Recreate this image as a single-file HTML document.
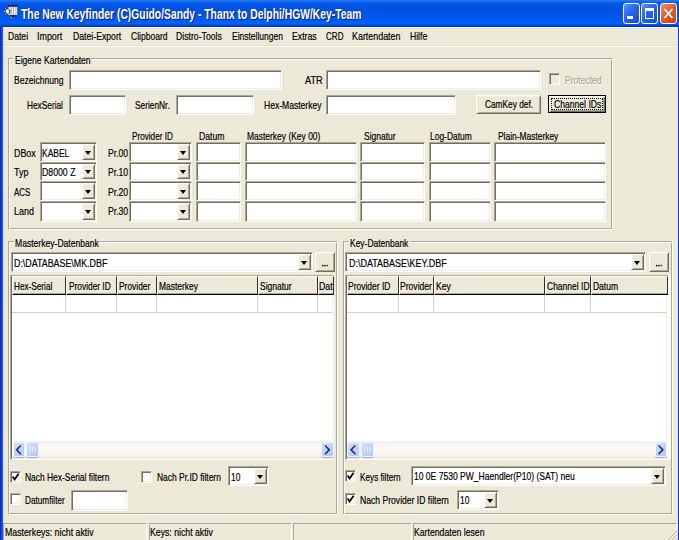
<!DOCTYPE html><html><head><meta charset="utf-8"><style>
html,body{margin:0;padding:0;}
body{width:679px;height:540px;position:relative;overflow:hidden;background:#ECE9D8;font-family:"Liberation Sans",sans-serif;}
.t{position:absolute;white-space:nowrap;line-height:1;transform-origin:0 0;-webkit-text-stroke:0.2px currentColor;}
.r{position:absolute;box-sizing:border-box;}
</style></head><body>
<div class="r" style="left:0px;top:0px;width:3px;height:540px;background:linear-gradient(to right,#0018C0,#1A4AE4 50%,#1E50E8);"></div>
<div class="r" style="left:678px;top:0px;width:1px;height:540px;background:#0A3CC8;"></div>
<div class="r" style="left:0px;top:0px;width:679px;height:27px;background:linear-gradient(to bottom,#2A7CF4 0px,#0F64EE 2px,#0058EA 4px,#0050E0 9px,#0054E6 14px,#005CF4 20px,#0062F8 24px,#0048D4 25px,#0035B8 27px);"></div>
<div class="t" style="left:22.10px;top:8.05px;font-size:14px;color:#0A1F6E;font-weight:bold;transform:scaleX(0.7386);-webkit-text-stroke:0;">The New Keyfinder (C)Guido/Sandy - Thanx to Delphi/HGW/Key-Team</div>
<div class="t" style="left:21.10px;top:7.05px;font-size:14px;color:#fff;font-weight:bold;transform:scaleX(0.7386);-webkit-text-stroke:0;">The New Keyfinder (C)Guido/Sandy - Thanx to Delphi/HGW/Key-Team</div>
<svg class="r" style="left:0px;top:0px" width="22" height="22" viewBox="0 0 22 22">
<rect x="8" y="5" width="9.5" height="1.8" fill="#0A1450"/>
<rect x="8.6" y="6.8" width="8.6" height="8.4" fill="#FFFFFF"/>
<rect x="10.6" y="6.8" width="1" height="8.4" fill="#8880A8"/>
<rect x="13" y="6.8" width="1" height="8.4" fill="#A8A0C8"/>
<rect x="15.4" y="6.8" width="1" height="8.4" fill="#A8A0C8"/>
<path d="M9.5 15.2 H16.5 V16.2 L13.5 16.5 L12.5 19.5 L11 17 L9.5 16.5 Z" fill="#0A1450"/>
<path d="M10.8 16.3 L12.3 18.6" stroke="#C8E0F8" stroke-width="1"/>
<circle cx="8" cy="11.5" r="2.2" fill="#F0E488"/>
<path d="M9 9.3 Q10.6 11.2 9.2 13.8" stroke="#505020" stroke-width="1.1" fill="none"/>
<circle cx="7" cy="10.5" r="0.9" fill="#FFFBD8"/>
<circle cx="4.6" cy="10" r="0.6" fill="#101010"/><circle cx="4.8" cy="12.8" r="0.6" fill="#101010"/><circle cx="6.3" cy="8.2" r="0.6" fill="#101010"/><circle cx="6.4" cy="14.8" r="0.6" fill="#101010"/>
<circle cx="4.4" cy="11.4" r="0.6" fill="#E8F8FF"/><circle cx="5.5" cy="8.8" r="0.5" fill="#E8F8FF"/><circle cx="5.6" cy="14.2" r="0.5" fill="#E8F8FF"/>
</svg>
<div class="r" style="left:623px;top:3px;width:17px;height:21px;border:1px solid #fff;border-radius:3px;background:linear-gradient(135deg,#5A8EF8,#2460E8 50%,#1A4FD0);"></div>
<div class="r" style="left:641px;top:3px;width:17px;height:21px;border:1px solid #fff;border-radius:3px;background:linear-gradient(135deg,#5A8EF8,#2460E8 50%,#1A4FD0);"></div>
<div class="r" style="left:660px;top:3px;width:17px;height:21px;border:1px solid #fff;border-radius:3px;background:linear-gradient(135deg,#F09070,#E05A28 50%,#C84418);"></div>
<div class="r" style="left:627px;top:16px;width:6px;height:3px;background:#fff;"></div>
<div class="r" style="left:645px;top:8px;width:9px;height:11px;border:1px solid #fff;border-top-width:3px;"></div>
<svg class="r" style="left:660px;top:3px" width="17" height="21"><path d="M4.5 6 L12.5 15 M12.5 6 L4.5 15" stroke="#fff" stroke-width="1.8"/></svg>
<div class="r" style="left:3px;top:27px;width:675px;height:513px;background:#ECE9D8;"></div>
<div class="r" style="left:3px;top:27px;width:674px;height:1px;background:#F8F6EE;"></div>
<div class="t" style="left:7.70px;top:30.87px;font-size:11.5px;color:#000;transform:scaleX(0.7464);">Datei</div>
<div class="t" style="left:37.10px;top:30.87px;font-size:11.5px;color:#000;transform:scaleX(0.7746);">Import</div>
<div class="t" style="left:72.50px;top:30.87px;font-size:11.5px;color:#000;transform:scaleX(0.7546);">Datei-Export</div>
<div class="t" style="left:130.50px;top:30.87px;font-size:11.5px;color:#000;transform:scaleX(0.7416);">Clipboard</div>
<div class="t" style="left:176.40px;top:30.87px;font-size:11.5px;color:#000;transform:scaleX(0.7559);">Distro-Tools</div>
<div class="t" style="left:231.60px;top:30.87px;font-size:11.5px;color:#000;transform:scaleX(0.7377);">Einstellungen</div>
<div class="t" style="left:291.80px;top:30.87px;font-size:11.5px;color:#000;transform:scaleX(0.7589);">Extras</div>
<div class="t" style="left:325.80px;top:30.87px;font-size:11.5px;color:#000;transform:scaleX(0.7013);">CRD</div>
<div class="t" style="left:352.40px;top:30.87px;font-size:11.5px;color:#000;transform:scaleX(0.7738);">Kartendaten</div>
<div class="t" style="left:410.20px;top:30.87px;font-size:11.5px;color:#000;transform:scaleX(0.7478);">Hilfe</div>
<div class="r" style="left:3px;top:45px;width:674px;height:1px;background:#E2DECD;"></div>
<div class="r" style="left:3px;top:46px;width:674px;height:1px;background:#fff;"></div>
<div class="r" style="left:8px;top:58px;width:604px;height:171px;border:1px solid #ACA899;"></div>
<div class="r" style="left:9px;top:59px;width:604px;height:171px;border:1px solid #fff;"></div>
<div class="r" style="left:13px;top:53px;width:78px;height:10px;background:#ECE9D8;"></div>
<div class="t" style="left:14.50px;top:55.17px;font-size:11.5px;color:#000;transform:scaleX(0.7437);">Eigene Kartendaten</div>
<div class="t" style="left:13.80px;top:75.17px;font-size:11.5px;color:#000;transform:scaleX(0.7447);">Bezeichnung</div>
<div class="r" style="left:69px;top:70px;width:213px;height:20px;background:#fff;border-style:solid;border-width:1px;border-color:#ACA899 #fff #fff #ACA899;box-shadow:inset 1px 1px 0 #716F64,inset -1px -1px 0 #F1EFE2;"></div>
<div class="t" style="left:304.70px;top:75.17px;font-size:11.5px;color:#000;transform:scaleX(0.8020);">ATR</div>
<div class="r" style="left:326px;top:70px;width:215px;height:20px;background:#fff;border-style:solid;border-width:1px;border-color:#ACA899 #fff #fff #ACA899;box-shadow:inset 1px 1px 0 #716F64,inset -1px -1px 0 #F1EFE2;"></div>
<div class="r" style="left:549px;top:73px;width:11px;height:12px;background:#ECE9D8;border-style:solid;border-width:1px;border-color:#ACA899 #fff #fff #ACA899;box-shadow:inset 1px 1px 0 #716F64,inset -1px -1px 0 #F1EFE2;"></div>
<div class="t" style="left:564.50px;top:74.87px;font-size:11.5px;color:#ACA899;transform:scaleX(0.7416);text-shadow:1px 1px 0 #fff;">Protected</div>
<div class="t" style="left:27.40px;top:100.27px;font-size:11.5px;color:#000;transform:scaleX(0.7210);">HexSerial</div>
<div class="r" style="left:69px;top:95px;width:57px;height:20px;background:#fff;border-style:solid;border-width:1px;border-color:#ACA899 #fff #fff #ACA899;box-shadow:inset 1px 1px 0 #716F64,inset -1px -1px 0 #F1EFE2;"></div>
<div class="t" style="left:134.60px;top:100.27px;font-size:11.5px;color:#000;transform:scaleX(0.7236);">SerienNr.</div>
<div class="r" style="left:176px;top:95px;width:78px;height:20px;background:#fff;border-style:solid;border-width:1px;border-color:#ACA899 #fff #fff #ACA899;box-shadow:inset 1px 1px 0 #716F64,inset -1px -1px 0 #F1EFE2;"></div>
<div class="t" style="left:263.50px;top:100.27px;font-size:11.5px;color:#000;transform:scaleX(0.7440);">Hex-Masterkey</div>
<div class="r" style="left:326px;top:95px;width:130px;height:20px;background:#fff;border-style:solid;border-width:1px;border-color:#ACA899 #fff #fff #ACA899;box-shadow:inset 1px 1px 0 #716F64,inset -1px -1px 0 #F1EFE2;"></div>
<div class="r" style="left:476px;top:95px;width:65px;height:19px;background:#ECE9D8;border-style:solid;border-width:1px;border-color:#fff #716F64 #716F64 #fff;box-shadow:inset 1px 1px 0 #F1EFE2,inset -1px -1px 0 #ACA899;"></div>
<div class="t" style="left:485.00px;top:98.67px;font-size:11.5px;color:#000;transform:scaleX(0.7221);">CamKey def.</div>
<div class="r" style="left:548px;top:95px;width:58px;height:18px;border:1px solid #000;background:#ECE9D8;box-shadow:inset 1px 1px 0 #fff,inset -1px -1px 0 #716F64,inset 2px 2px 0 #F1EFE2,inset -2px -2px 0 #ACA899;"></div>
<div class="r" style="left:551px;top:98px;width:52px;height:12px;border:1px dotted #000;"></div>
<div class="t" style="left:553.50px;top:98.67px;font-size:11.5px;color:#000;transform:scaleX(0.7478);">Channel IDs</div>
<div class="t" style="left:131.90px;top:130.67px;font-size:11.5px;color:#000;transform:scaleX(0.7096);">Provider ID</div>
<div class="t" style="left:198.50px;top:130.67px;font-size:11.5px;color:#000;transform:scaleX(0.7517);">Datum</div>
<div class="t" style="left:246.70px;top:130.67px;font-size:11.5px;color:#000;transform:scaleX(0.7362);">Masterkey (Key 00)</div>
<div class="t" style="left:363.60px;top:130.67px;font-size:11.5px;color:#000;transform:scaleX(0.7387);">Signatur</div>
<div class="t" style="left:430.30px;top:130.67px;font-size:11.5px;color:#000;transform:scaleX(0.7361);">Log-Datum</div>
<div class="t" style="left:497.50px;top:130.67px;font-size:11.5px;color:#000;transform:scaleX(0.7313);">Plain-Masterkey</div>
<div class="t" style="left:13.60px;top:147.97px;font-size:11.5px;color:#000;transform:scaleX(0.7702);">DBox</div>
<div class="r" style="left:40px;top:142px;width:57px;height:20px;background:#fff;border-style:solid;border-width:1px;border-color:#ACA899 #fff #fff #ACA899;box-shadow:inset 1px 1px 0 #716F64,inset -1px -1px 0 #F1EFE2;"></div>
<div class="r" style="left:82px;top:144px;width:13px;height:16px;background:#ECE9D8;border-style:solid;border-width:1px;border-color:#fff #716F64 #716F64 #fff;box-shadow:inset 1px 1px 0 #F1EFE2,inset -1px -1px 0 #ACA899;"></div>
<div class="r" style="left:85.3px;top:150.7px;width:0;height:0;border-left:3.5px solid transparent;border-right:3.5px solid transparent;border-top:4px solid #000;"></div>
<div class="t" style="left:107.50px;top:147.97px;font-size:11.5px;color:#000;transform:scaleX(0.7501);">Pr.00</div>
<div class="r" style="left:129px;top:142px;width:63px;height:20px;background:#fff;border-style:solid;border-width:1px;border-color:#ACA899 #fff #fff #ACA899;box-shadow:inset 1px 1px 0 #716F64,inset -1px -1px 0 #F1EFE2;"></div>
<div class="r" style="left:177px;top:144px;width:13px;height:16px;background:#ECE9D8;border-style:solid;border-width:1px;border-color:#fff #716F64 #716F64 #fff;box-shadow:inset 1px 1px 0 #F1EFE2,inset -1px -1px 0 #ACA899;"></div>
<div class="r" style="left:180.3px;top:150.7px;width:0;height:0;border-left:3.5px solid transparent;border-right:3.5px solid transparent;border-top:4px solid #000;"></div>
<div class="r" style="left:196px;top:142px;width:45px;height:20px;background:#fff;border-style:solid;border-width:1px;border-color:#ACA899 #fff #fff #ACA899;box-shadow:inset 1px 1px 0 #716F64,inset -1px -1px 0 #F1EFE2;"></div>
<div class="r" style="left:245px;top:142px;width:112px;height:20px;background:#fff;border-style:solid;border-width:1px;border-color:#ACA899 #fff #fff #ACA899;box-shadow:inset 1px 1px 0 #716F64,inset -1px -1px 0 #F1EFE2;"></div>
<div class="r" style="left:360px;top:142px;width:65px;height:20px;background:#fff;border-style:solid;border-width:1px;border-color:#ACA899 #fff #fff #ACA899;box-shadow:inset 1px 1px 0 #716F64,inset -1px -1px 0 #F1EFE2;"></div>
<div class="r" style="left:429px;top:142px;width:62px;height:20px;background:#fff;border-style:solid;border-width:1px;border-color:#ACA899 #fff #fff #ACA899;box-shadow:inset 1px 1px 0 #716F64,inset -1px -1px 0 #F1EFE2;"></div>
<div class="r" style="left:494px;top:142px;width:112px;height:20px;background:#fff;border-style:solid;border-width:1px;border-color:#ACA899 #fff #fff #ACA899;box-shadow:inset 1px 1px 0 #716F64,inset -1px -1px 0 #F1EFE2;"></div>
<div class="t" style="left:13.60px;top:167.47px;font-size:11.5px;color:#000;transform:scaleX(0.7777);">Typ</div>
<div class="r" style="left:40px;top:162px;width:57px;height:19px;background:#fff;border-style:solid;border-width:1px;border-color:#ACA899 #fff #fff #ACA899;box-shadow:inset 1px 1px 0 #716F64,inset -1px -1px 0 #F1EFE2;"></div>
<div class="r" style="left:82px;top:164px;width:13px;height:15px;background:#ECE9D8;border-style:solid;border-width:1px;border-color:#fff #716F64 #716F64 #fff;box-shadow:inset 1px 1px 0 #F1EFE2,inset -1px -1px 0 #ACA899;"></div>
<div class="r" style="left:85.3px;top:170.2px;width:0;height:0;border-left:3.5px solid transparent;border-right:3.5px solid transparent;border-top:4px solid #000;"></div>
<div class="t" style="left:107.50px;top:167.47px;font-size:11.5px;color:#000;transform:scaleX(0.7501);">Pr.10</div>
<div class="r" style="left:129px;top:162px;width:63px;height:19px;background:#fff;border-style:solid;border-width:1px;border-color:#ACA899 #fff #fff #ACA899;box-shadow:inset 1px 1px 0 #716F64,inset -1px -1px 0 #F1EFE2;"></div>
<div class="r" style="left:177px;top:164px;width:13px;height:15px;background:#ECE9D8;border-style:solid;border-width:1px;border-color:#fff #716F64 #716F64 #fff;box-shadow:inset 1px 1px 0 #F1EFE2,inset -1px -1px 0 #ACA899;"></div>
<div class="r" style="left:180.3px;top:170.2px;width:0;height:0;border-left:3.5px solid transparent;border-right:3.5px solid transparent;border-top:4px solid #000;"></div>
<div class="r" style="left:196px;top:162px;width:45px;height:19px;background:#fff;border-style:solid;border-width:1px;border-color:#ACA899 #fff #fff #ACA899;box-shadow:inset 1px 1px 0 #716F64,inset -1px -1px 0 #F1EFE2;"></div>
<div class="r" style="left:245px;top:162px;width:112px;height:19px;background:#fff;border-style:solid;border-width:1px;border-color:#ACA899 #fff #fff #ACA899;box-shadow:inset 1px 1px 0 #716F64,inset -1px -1px 0 #F1EFE2;"></div>
<div class="r" style="left:360px;top:162px;width:65px;height:19px;background:#fff;border-style:solid;border-width:1px;border-color:#ACA899 #fff #fff #ACA899;box-shadow:inset 1px 1px 0 #716F64,inset -1px -1px 0 #F1EFE2;"></div>
<div class="r" style="left:429px;top:162px;width:62px;height:19px;background:#fff;border-style:solid;border-width:1px;border-color:#ACA899 #fff #fff #ACA899;box-shadow:inset 1px 1px 0 #716F64,inset -1px -1px 0 #F1EFE2;"></div>
<div class="r" style="left:494px;top:162px;width:112px;height:19px;background:#fff;border-style:solid;border-width:1px;border-color:#ACA899 #fff #fff #ACA899;box-shadow:inset 1px 1px 0 #716F64,inset -1px -1px 0 #F1EFE2;"></div>
<div class="t" style="left:13.60px;top:186.67px;font-size:11.5px;color:#000;transform:scaleX(0.6881);">ACS</div>
<div class="r" style="left:40px;top:181px;width:57px;height:20px;background:#fff;border-style:solid;border-width:1px;border-color:#ACA899 #fff #fff #ACA899;box-shadow:inset 1px 1px 0 #716F64,inset -1px -1px 0 #F1EFE2;"></div>
<div class="r" style="left:82px;top:183px;width:13px;height:16px;background:#ECE9D8;border-style:solid;border-width:1px;border-color:#fff #716F64 #716F64 #fff;box-shadow:inset 1px 1px 0 #F1EFE2,inset -1px -1px 0 #ACA899;"></div>
<div class="r" style="left:85.3px;top:189.7px;width:0;height:0;border-left:3.5px solid transparent;border-right:3.5px solid transparent;border-top:4px solid #000;"></div>
<div class="t" style="left:107.50px;top:186.67px;font-size:11.5px;color:#000;transform:scaleX(0.7501);">Pr.20</div>
<div class="r" style="left:129px;top:181px;width:63px;height:20px;background:#fff;border-style:solid;border-width:1px;border-color:#ACA899 #fff #fff #ACA899;box-shadow:inset 1px 1px 0 #716F64,inset -1px -1px 0 #F1EFE2;"></div>
<div class="r" style="left:177px;top:183px;width:13px;height:16px;background:#ECE9D8;border-style:solid;border-width:1px;border-color:#fff #716F64 #716F64 #fff;box-shadow:inset 1px 1px 0 #F1EFE2,inset -1px -1px 0 #ACA899;"></div>
<div class="r" style="left:180.3px;top:189.7px;width:0;height:0;border-left:3.5px solid transparent;border-right:3.5px solid transparent;border-top:4px solid #000;"></div>
<div class="r" style="left:196px;top:181px;width:45px;height:20px;background:#fff;border-style:solid;border-width:1px;border-color:#ACA899 #fff #fff #ACA899;box-shadow:inset 1px 1px 0 #716F64,inset -1px -1px 0 #F1EFE2;"></div>
<div class="r" style="left:245px;top:181px;width:112px;height:20px;background:#fff;border-style:solid;border-width:1px;border-color:#ACA899 #fff #fff #ACA899;box-shadow:inset 1px 1px 0 #716F64,inset -1px -1px 0 #F1EFE2;"></div>
<div class="r" style="left:360px;top:181px;width:65px;height:20px;background:#fff;border-style:solid;border-width:1px;border-color:#ACA899 #fff #fff #ACA899;box-shadow:inset 1px 1px 0 #716F64,inset -1px -1px 0 #F1EFE2;"></div>
<div class="r" style="left:429px;top:181px;width:62px;height:20px;background:#fff;border-style:solid;border-width:1px;border-color:#ACA899 #fff #fff #ACA899;box-shadow:inset 1px 1px 0 #716F64,inset -1px -1px 0 #F1EFE2;"></div>
<div class="r" style="left:494px;top:181px;width:112px;height:20px;background:#fff;border-style:solid;border-width:1px;border-color:#ACA899 #fff #fff #ACA899;box-shadow:inset 1px 1px 0 #716F64,inset -1px -1px 0 #F1EFE2;"></div>
<div class="t" style="left:13.60px;top:205.77px;font-size:11.5px;color:#000;transform:scaleX(0.7756);">Land</div>
<div class="r" style="left:40px;top:201px;width:57px;height:21px;background:#fff;border-style:solid;border-width:1px;border-color:#ACA899 #fff #fff #ACA899;box-shadow:inset 1px 1px 0 #716F64,inset -1px -1px 0 #F1EFE2;"></div>
<div class="r" style="left:82px;top:203px;width:13px;height:17px;background:#ECE9D8;border-style:solid;border-width:1px;border-color:#fff #716F64 #716F64 #fff;box-shadow:inset 1px 1px 0 #F1EFE2,inset -1px -1px 0 #ACA899;"></div>
<div class="r" style="left:85.3px;top:210.2px;width:0;height:0;border-left:3.5px solid transparent;border-right:3.5px solid transparent;border-top:4px solid #000;"></div>
<div class="t" style="left:107.50px;top:205.77px;font-size:11.5px;color:#000;transform:scaleX(0.7501);">Pr.30</div>
<div class="r" style="left:129px;top:201px;width:63px;height:21px;background:#fff;border-style:solid;border-width:1px;border-color:#ACA899 #fff #fff #ACA899;box-shadow:inset 1px 1px 0 #716F64,inset -1px -1px 0 #F1EFE2;"></div>
<div class="r" style="left:177px;top:203px;width:13px;height:17px;background:#ECE9D8;border-style:solid;border-width:1px;border-color:#fff #716F64 #716F64 #fff;box-shadow:inset 1px 1px 0 #F1EFE2,inset -1px -1px 0 #ACA899;"></div>
<div class="r" style="left:180.3px;top:210.2px;width:0;height:0;border-left:3.5px solid transparent;border-right:3.5px solid transparent;border-top:4px solid #000;"></div>
<div class="r" style="left:196px;top:201px;width:45px;height:21px;background:#fff;border-style:solid;border-width:1px;border-color:#ACA899 #fff #fff #ACA899;box-shadow:inset 1px 1px 0 #716F64,inset -1px -1px 0 #F1EFE2;"></div>
<div class="r" style="left:245px;top:201px;width:112px;height:21px;background:#fff;border-style:solid;border-width:1px;border-color:#ACA899 #fff #fff #ACA899;box-shadow:inset 1px 1px 0 #716F64,inset -1px -1px 0 #F1EFE2;"></div>
<div class="r" style="left:360px;top:201px;width:65px;height:21px;background:#fff;border-style:solid;border-width:1px;border-color:#ACA899 #fff #fff #ACA899;box-shadow:inset 1px 1px 0 #716F64,inset -1px -1px 0 #F1EFE2;"></div>
<div class="r" style="left:429px;top:201px;width:62px;height:21px;background:#fff;border-style:solid;border-width:1px;border-color:#ACA899 #fff #fff #ACA899;box-shadow:inset 1px 1px 0 #716F64,inset -1px -1px 0 #F1EFE2;"></div>
<div class="r" style="left:494px;top:201px;width:112px;height:21px;background:#fff;border-style:solid;border-width:1px;border-color:#ACA899 #fff #fff #ACA899;box-shadow:inset 1px 1px 0 #716F64,inset -1px -1px 0 #F1EFE2;"></div>
<div class="t" style="left:42.40px;top:147.97px;font-size:11.5px;color:#000;transform:scaleX(0.7372);">KABEL</div>
<div class="t" style="left:42.40px;top:167.47px;font-size:11.5px;color:#000;transform:scaleX(0.7586);">D8000 Z</div>
<div class="r" style="left:8px;top:241px;width:329px;height:273px;border:1px solid #ACA899;"></div>
<div class="r" style="left:9px;top:242px;width:329px;height:273px;border:1px solid #fff;"></div>
<div class="r" style="left:14px;top:236px;width:86px;height:10px;background:#ECE9D8;"></div>
<div class="t" style="left:15.00px;top:238.27px;font-size:11.5px;color:#000;transform:scaleX(0.7452);">Masterkey-Datenbank</div>
<div class="r" style="left:11px;top:252px;width:302px;height:20px;background:#fff;border-style:solid;border-width:1px;border-color:#ACA899 #fff #fff #ACA899;box-shadow:inset 1px 1px 0 #716F64,inset -1px -1px 0 #F1EFE2;"></div>
<div class="r" style="left:298px;top:254px;width:13px;height:16px;background:#ECE9D8;border-style:solid;border-width:1px;border-color:#fff #716F64 #716F64 #fff;box-shadow:inset 1px 1px 0 #F1EFE2,inset -1px -1px 0 #ACA899;"></div>
<div class="r" style="left:301.3px;top:260.7px;width:0;height:0;border-left:3.5px solid transparent;border-right:3.5px solid transparent;border-top:4px solid #000;"></div>
<div class="t" style="left:14.20px;top:257.87px;font-size:11.5px;color:#000;transform:scaleX(0.7712);">D:\DATABASE\MK.DBF</div>
<div class="r" style="left:315px;top:252px;width:20px;height:20px;background:#ECE9D8;border-style:solid;border-width:1px;border-color:#fff #716F64 #716F64 #fff;box-shadow:inset 1px 1px 0 #F1EFE2,inset -1px -1px 0 #ACA899;"></div>
<svg class="r" style="left:320.2px;top:262.9px" width="12" height="5"><circle cx="2.7" cy="2.6" r="0.85" fill="#000"/><circle cx="5.0" cy="2.6" r="0.85" fill="#000"/><circle cx="7.3" cy="2.6" r="0.8" fill="#222"/></svg>
<div class="r" style="left:10px;top:275px;width:324px;height:185px;background:#fff;border-style:solid;border-width:1px;border-color:#ACA899 #fff #fff #ACA899;box-shadow:inset 1px 1px 0 #716F64,inset -1px -1px 0 #F1EFE2;"></div>
<div class="r" style="left:12px;top:276px;width:54px;height:19px;background:#ECE9D8;border-style:solid;border-width:1px;border-color:#fff #303030 #000 #fff;box-shadow:inset 0 -1px 0 #ACA899;"></div>
<div class="r" style="left:66px;top:276px;width:51px;height:19px;background:#ECE9D8;border-style:solid;border-width:1px;border-color:#fff #303030 #000 #fff;box-shadow:inset 0 -1px 0 #ACA899;"></div>
<div class="r" style="left:117px;top:276px;width:40px;height:19px;background:#ECE9D8;border-style:solid;border-width:1px;border-color:#fff #303030 #000 #fff;box-shadow:inset 0 -1px 0 #ACA899;"></div>
<div class="r" style="left:157px;top:276px;width:101px;height:19px;background:#ECE9D8;border-style:solid;border-width:1px;border-color:#fff #303030 #000 #fff;box-shadow:inset 0 -1px 0 #ACA899;"></div>
<div class="r" style="left:258px;top:276px;width:60px;height:19px;background:#ECE9D8;border-style:solid;border-width:1px;border-color:#fff #303030 #000 #fff;box-shadow:inset 0 -1px 0 #ACA899;"></div>
<div class="r" style="left:318px;top:276px;width:16px;height:19px;background:#ECE9D8;border-style:solid;border-width:1px;border-color:#fff #303030 #000 #fff;box-shadow:inset 0 -1px 0 #ACA899;"></div>
<div class="t" style="left:14.20px;top:281.27px;font-size:11.5px;color:#000;transform:scaleX(0.7132);">Hex-Serial</div>
<div class="t" style="left:68.50px;top:281.27px;font-size:11.5px;color:#000;transform:scaleX(0.7252);">Provider ID</div>
<div class="t" style="left:119.00px;top:281.27px;font-size:11.5px;color:#000;transform:scaleX(0.7317);">Provider</div>
<div class="t" style="left:159.00px;top:281.27px;font-size:11.5px;color:#000;transform:scaleX(0.7356);">Masterkey</div>
<div class="t" style="left:259.70px;top:281.27px;font-size:11.5px;color:#000;transform:scaleX(0.7387);">Signatur</div>
<div class="r" style="left:12px;top:312px;width:320px;height:1px;background:#D4D0C8;"></div>
<div class="r" style="left:65px;top:295px;width:1px;height:17px;background:#D4D0C8;"></div>
<div class="r" style="left:116px;top:295px;width:1px;height:17px;background:#D4D0C8;"></div>
<div class="r" style="left:156px;top:295px;width:1px;height:17px;background:#D4D0C8;"></div>
<div class="r" style="left:257px;top:295px;width:1px;height:17px;background:#D4D0C8;"></div>
<div class="r" style="left:317px;top:295px;width:1px;height:17px;background:#D4D0C8;"></div>
<div class="t" style="left:318.70px;top:281.27px;font-size:11.5px;color:#000;transform:scaleX(0.7637);">Dat</div>
<div class="r" style="left:13px;top:441px;width:319px;height:17px;background:linear-gradient(to bottom,#F0EFE8,#FBFAF6 40%,#F6F5EE 80%,#EEEDE5);"></div>
<div class="r" style="left:13px;top:442px;width:12px;height:15px;border:1px solid #F0F4FF;border-radius:2px;box-shadow:0 1px 0 #A4B4D4;background:linear-gradient(135deg,#D4E0FC,#C0CFF8 60%,#B4C6F4);"></div>
<svg class="r" style="left:13px;top:442px" width="12" height="15"><path d="M7.8 3.5 L3.6 7.8 L7.8 12.1" stroke="#26386E" stroke-width="1.7" fill="none"/></svg>
<div class="r" style="left:26px;top:442px;width:13px;height:15px;border:1px solid #F0F4FF;border-radius:2px;box-shadow:0 1px 0 #A4B4D4;background:linear-gradient(135deg,#D4E0FC,#C0CFF8 60%,#B4C6F4);"></div>
<svg class="r" style="left:26px;top:442px" width="13" height="15"><path d="M4.0 4.5 V10.5 M6.5 4.5 V10.5 M9.0 4.5 V10.5" stroke="#E8EEFE" stroke-width="1" fill="none"/></svg>
<div class="r" style="left:321px;top:442px;width:13px;height:15px;border:1px solid #F0F4FF;border-radius:2px;box-shadow:0 1px 0 #A4B4D4;background:linear-gradient(135deg,#D4E0FC,#C0CFF8 60%,#B4C6F4);"></div>
<svg class="r" style="left:321px;top:442px" width="13" height="15"><path d="M4.1 3.5 L8.3 7.8 L4.1 12.1" stroke="#26386E" stroke-width="1.7" fill="none"/></svg>
<div class="r" style="left:10px;top:471px;width:11px;height:12px;background:#fff;border-style:solid;border-width:1px;border-color:#ACA899 #fff #fff #ACA899;box-shadow:inset 1px 1px 0 #716F64,inset -1px -1px 0 #F1EFE2;"></div>
<svg class="r" style="left:10px;top:471px" width="11" height="12"><path d="M2.6 5.6 L4.6 8.4 L8.6 2.8" stroke="#000" stroke-width="1.8" fill="none"/></svg>
<div class="t" style="left:25.10px;top:472.27px;font-size:11.5px;color:#000;transform:scaleX(0.7330);">Nach Hex-Serial filtern</div>
<div class="r" style="left:10px;top:493px;width:11px;height:12px;background:#fff;border-style:solid;border-width:1px;border-color:#ACA899 #fff #fff #ACA899;box-shadow:inset 1px 1px 0 #716F64,inset -1px -1px 0 #F1EFE2;"></div>
<div class="t" style="left:25.10px;top:494.87px;font-size:11.5px;color:#000;transform:scaleX(0.7147);">Datumfilter</div>
<div class="r" style="left:71px;top:490px;width:57px;height:21px;background:#fff;border-style:solid;border-width:1px;border-color:#ACA899 #fff #fff #ACA899;box-shadow:inset 1px 1px 0 #716F64,inset -1px -1px 0 #F1EFE2;"></div>
<div class="r" style="left:141px;top:471px;width:11px;height:12px;background:#fff;border-style:solid;border-width:1px;border-color:#ACA899 #fff #fff #ACA899;box-shadow:inset 1px 1px 0 #716F64,inset -1px -1px 0 #F1EFE2;"></div>
<div class="t" style="left:157.30px;top:471.67px;font-size:11.5px;color:#000;transform:scaleX(0.7350);">Nach Pr.ID filtern</div>
<div class="r" style="left:228px;top:466px;width:41px;height:20px;background:#fff;border-style:solid;border-width:1px;border-color:#ACA899 #fff #fff #ACA899;box-shadow:inset 1px 1px 0 #716F64,inset -1px -1px 0 #F1EFE2;"></div>
<div class="r" style="left:254px;top:468px;width:13px;height:16px;background:#ECE9D8;border-style:solid;border-width:1px;border-color:#fff #716F64 #716F64 #fff;box-shadow:inset 1px 1px 0 #F1EFE2,inset -1px -1px 0 #ACA899;"></div>
<div class="r" style="left:257.3px;top:474.7px;width:0;height:0;border-left:3.5px solid transparent;border-right:3.5px solid transparent;border-top:4px solid #000;"></div>
<div class="t" style="left:231.00px;top:471.67px;font-size:11.5px;color:#000;transform:scaleX(0.7286);">10</div>
<div class="r" style="left:343px;top:241px;width:329px;height:273px;border:1px solid #ACA899;"></div>
<div class="r" style="left:344px;top:242px;width:329px;height:273px;border:1px solid #fff;"></div>
<div class="r" style="left:348px;top:236px;width:62px;height:10px;background:#ECE9D8;"></div>
<div class="t" style="left:349.60px;top:238.27px;font-size:11.5px;color:#000;transform:scaleX(0.7360);">Key-Datenbank</div>
<div class="r" style="left:345px;top:252px;width:301px;height:20px;background:#fff;border-style:solid;border-width:1px;border-color:#ACA899 #fff #fff #ACA899;box-shadow:inset 1px 1px 0 #716F64,inset -1px -1px 0 #F1EFE2;"></div>
<div class="r" style="left:631px;top:254px;width:13px;height:16px;background:#ECE9D8;border-style:solid;border-width:1px;border-color:#fff #716F64 #716F64 #fff;box-shadow:inset 1px 1px 0 #F1EFE2,inset -1px -1px 0 #ACA899;"></div>
<div class="r" style="left:634.3px;top:260.7px;width:0;height:0;border-left:3.5px solid transparent;border-right:3.5px solid transparent;border-top:4px solid #000;"></div>
<div class="t" style="left:348.60px;top:257.87px;font-size:11.5px;color:#000;transform:scaleX(0.7801);">D:\DATABASE\KEY.DBF</div>
<div class="r" style="left:649px;top:252px;width:20px;height:20px;background:#ECE9D8;border-style:solid;border-width:1px;border-color:#fff #716F64 #716F64 #fff;box-shadow:inset 1px 1px 0 #F1EFE2,inset -1px -1px 0 #ACA899;"></div>
<svg class="r" style="left:654.2px;top:262.9px" width="12" height="5"><circle cx="2.7" cy="2.6" r="0.85" fill="#000"/><circle cx="5.0" cy="2.6" r="0.85" fill="#000"/><circle cx="7.3" cy="2.6" r="0.8" fill="#222"/></svg>
<div class="r" style="left:345px;top:275px;width:323px;height:185px;background:#fff;border-style:solid;border-width:1px;border-color:#ACA899 #fff #fff #ACA899;box-shadow:inset 1px 1px 0 #716F64,inset -1px -1px 0 #F1EFE2;"></div>
<div class="r" style="left:347px;top:276px;width:52px;height:19px;background:#ECE9D8;border-style:solid;border-width:1px;border-color:#fff #303030 #000 #fff;box-shadow:inset 0 -1px 0 #ACA899;"></div>
<div class="r" style="left:399px;top:276px;width:35px;height:19px;background:#ECE9D8;border-style:solid;border-width:1px;border-color:#fff #303030 #000 #fff;box-shadow:inset 0 -1px 0 #ACA899;"></div>
<div class="r" style="left:434px;top:276px;width:111px;height:19px;background:#ECE9D8;border-style:solid;border-width:1px;border-color:#fff #303030 #000 #fff;box-shadow:inset 0 -1px 0 #ACA899;"></div>
<div class="r" style="left:545px;top:276px;width:46px;height:19px;background:#ECE9D8;border-style:solid;border-width:1px;border-color:#fff #303030 #000 #fff;box-shadow:inset 0 -1px 0 #ACA899;"></div>
<div class="r" style="left:591px;top:276px;width:77px;height:19px;background:#ECE9D8;border-style:solid;border-width:1px;border-color:#fff #303030 #000 #fff;box-shadow:inset 0 -1px 0 #ACA899;"></div>
<div class="t" style="left:348.30px;top:281.27px;font-size:11.5px;color:#000;transform:scaleX(0.7374);">Provider ID</div>
<div class="t" style="left:400.10px;top:281.27px;font-size:11.5px;color:#000;transform:scaleX(0.7457);">Provider</div>
<div class="t" style="left:435.50px;top:281.27px;font-size:11.5px;color:#000;transform:scaleX(0.7533);">Key</div>
<div class="t" style="left:546.80px;top:281.27px;font-size:11.5px;color:#000;transform:scaleX(0.7391);">Channel ID</div>
<div class="t" style="left:592.60px;top:281.27px;font-size:11.5px;color:#000;transform:scaleX(0.7369);">Datum</div>
<div class="r" style="left:347px;top:312px;width:319px;height:1px;background:#D4D0C8;"></div>
<div class="r" style="left:398px;top:295px;width:1px;height:17px;background:#D4D0C8;"></div>
<div class="r" style="left:433px;top:295px;width:1px;height:17px;background:#D4D0C8;"></div>
<div class="r" style="left:544px;top:295px;width:1px;height:17px;background:#D4D0C8;"></div>
<div class="r" style="left:590px;top:295px;width:1px;height:17px;background:#D4D0C8;"></div>
<div class="r" style="left:347px;top:441px;width:319px;height:17px;background:linear-gradient(to bottom,#F0EFE8,#FBFAF6 40%,#F6F5EE 80%,#EEEDE5);"></div>
<div class="r" style="left:347px;top:442px;width:13px;height:15px;border:1px solid #F0F4FF;border-radius:2px;box-shadow:0 1px 0 #A4B4D4;background:linear-gradient(135deg,#D4E0FC,#C0CFF8 60%,#B4C6F4);"></div>
<svg class="r" style="left:347px;top:442px" width="13" height="15"><path d="M8.3 3.5 L4.1 7.8 L8.3 12.1" stroke="#26386E" stroke-width="1.7" fill="none"/></svg>
<div class="r" style="left:361px;top:442px;width:13px;height:15px;border:1px solid #F0F4FF;border-radius:2px;box-shadow:0 1px 0 #A4B4D4;background:linear-gradient(135deg,#D4E0FC,#C0CFF8 60%,#B4C6F4);"></div>
<svg class="r" style="left:361px;top:442px" width="13" height="15"><path d="M4.0 4.5 V10.5 M6.5 4.5 V10.5 M9.0 4.5 V10.5" stroke="#E8EEFE" stroke-width="1" fill="none"/></svg>
<div class="r" style="left:655px;top:442px;width:12px;height:15px;border:1px solid #F0F4FF;border-radius:2px;box-shadow:0 1px 0 #A4B4D4;background:linear-gradient(135deg,#D4E0FC,#C0CFF8 60%,#B4C6F4);"></div>
<svg class="r" style="left:655px;top:442px" width="12" height="15"><path d="M3.6 3.5 L7.8 7.8 L3.6 12.1" stroke="#26386E" stroke-width="1.7" fill="none"/></svg>
<div class="r" style="left:668px;top:276px;width:3px;height:183px;background:#FAFAF6;"></div>
<div class="r" style="left:345px;top:470px;width:11px;height:12px;background:#fff;border-style:solid;border-width:1px;border-color:#ACA899 #fff #fff #ACA899;box-shadow:inset 1px 1px 0 #716F64,inset -1px -1px 0 #F1EFE2;"></div>
<svg class="r" style="left:345px;top:470px" width="11" height="12"><path d="M2.6 5.6 L4.6 8.4 L8.6 2.8" stroke="#000" stroke-width="1.8" fill="none"/></svg>
<div class="t" style="left:359.90px;top:471.87px;font-size:11.5px;color:#000;transform:scaleX(0.7132);">Keys filtern</div>
<div class="r" style="left:411px;top:466px;width:255px;height:20px;background:#fff;border-style:solid;border-width:1px;border-color:#ACA899 #fff #fff #ACA899;box-shadow:inset 1px 1px 0 #716F64,inset -1px -1px 0 #F1EFE2;"></div>
<div class="r" style="left:651px;top:468px;width:13px;height:16px;background:#ECE9D8;border-style:solid;border-width:1px;border-color:#fff #716F64 #716F64 #fff;box-shadow:inset 1px 1px 0 #F1EFE2,inset -1px -1px 0 #ACA899;"></div>
<div class="r" style="left:654.3px;top:474.7px;width:0;height:0;border-left:3.5px solid transparent;border-right:3.5px solid transparent;border-top:4px solid #000;"></div>
<div class="t" style="left:413.70px;top:471.27px;font-size:11.5px;color:#000;transform:scaleX(0.7425);">10 0E 7530 PW_Haendler(P10) (SAT) neu</div>
<div class="r" style="left:345px;top:493px;width:11px;height:12px;background:#fff;border-style:solid;border-width:1px;border-color:#ACA899 #fff #fff #ACA899;box-shadow:inset 1px 1px 0 #716F64,inset -1px -1px 0 #F1EFE2;"></div>
<svg class="r" style="left:345px;top:493px" width="11" height="12"><path d="M2.6 5.6 L4.6 8.4 L8.6 2.8" stroke="#000" stroke-width="1.8" fill="none"/></svg>
<div class="t" style="left:359.90px;top:495.07px;font-size:11.5px;color:#000;transform:scaleX(0.7476);">Nach Provider ID filtern</div>
<div class="r" style="left:457px;top:490px;width:42px;height:20px;background:#fff;border-style:solid;border-width:1px;border-color:#ACA899 #fff #fff #ACA899;box-shadow:inset 1px 1px 0 #716F64,inset -1px -1px 0 #F1EFE2;"></div>
<div class="r" style="left:484px;top:492px;width:13px;height:16px;background:#ECE9D8;border-style:solid;border-width:1px;border-color:#fff #716F64 #716F64 #fff;box-shadow:inset 1px 1px 0 #F1EFE2,inset -1px -1px 0 #ACA899;"></div>
<div class="r" style="left:487.3px;top:498.7px;width:0;height:0;border-left:3.5px solid transparent;border-right:3.5px solid transparent;border-top:4px solid #000;"></div>
<div class="t" style="left:460.00px;top:494.67px;font-size:11.5px;color:#000;transform:scaleX(0.7364);">10</div>
<div class="r" style="left:3px;top:523px;width:144px;height:17px;border-style:solid;border-width:1px 1px 0 1px;border-color:#ACA899 #fff #fff #ACA899;"></div>
<div class="r" style="left:149px;top:523px;width:143px;height:17px;border-style:solid;border-width:1px 1px 0 1px;border-color:#ACA899 #fff #fff #ACA899;"></div>
<div class="r" style="left:293px;top:523px;width:119px;height:17px;border-style:solid;border-width:1px 1px 0 1px;border-color:#ACA899 #fff #fff #ACA899;"></div>
<div class="r" style="left:413px;top:523px;width:264px;height:17px;border-style:solid;border-width:1px 1px 0 1px;border-color:#ACA899 #fff #fff #ACA899;"></div>
<div class="t" style="left:4.70px;top:526.87px;font-size:11.5px;color:#000;transform:scaleX(0.7612);">Masterkeys: nicht aktiv</div>
<div class="t" style="left:150.20px;top:526.87px;font-size:11.5px;color:#000;transform:scaleX(0.7564);">Keys: nicht aktiv</div>
<div class="t" style="left:414.40px;top:526.87px;font-size:11.5px;color:#000;transform:scaleX(0.7550);">Kartendaten lesen</div>
<svg class="r" style="left:665px;top:527px" width="14" height="13"><path d="M12 2 L2 12 M12 6 L6 12 M12 10 L10 12" stroke="#fff" stroke-width="1"/><path d="M12.8 2.8 L2.8 12.8 M12.8 6.8 L6.8 12.8 M12.8 10.8 L10.8 12.8" stroke="#ACA899" stroke-width="1"/></svg>
</body></html>
